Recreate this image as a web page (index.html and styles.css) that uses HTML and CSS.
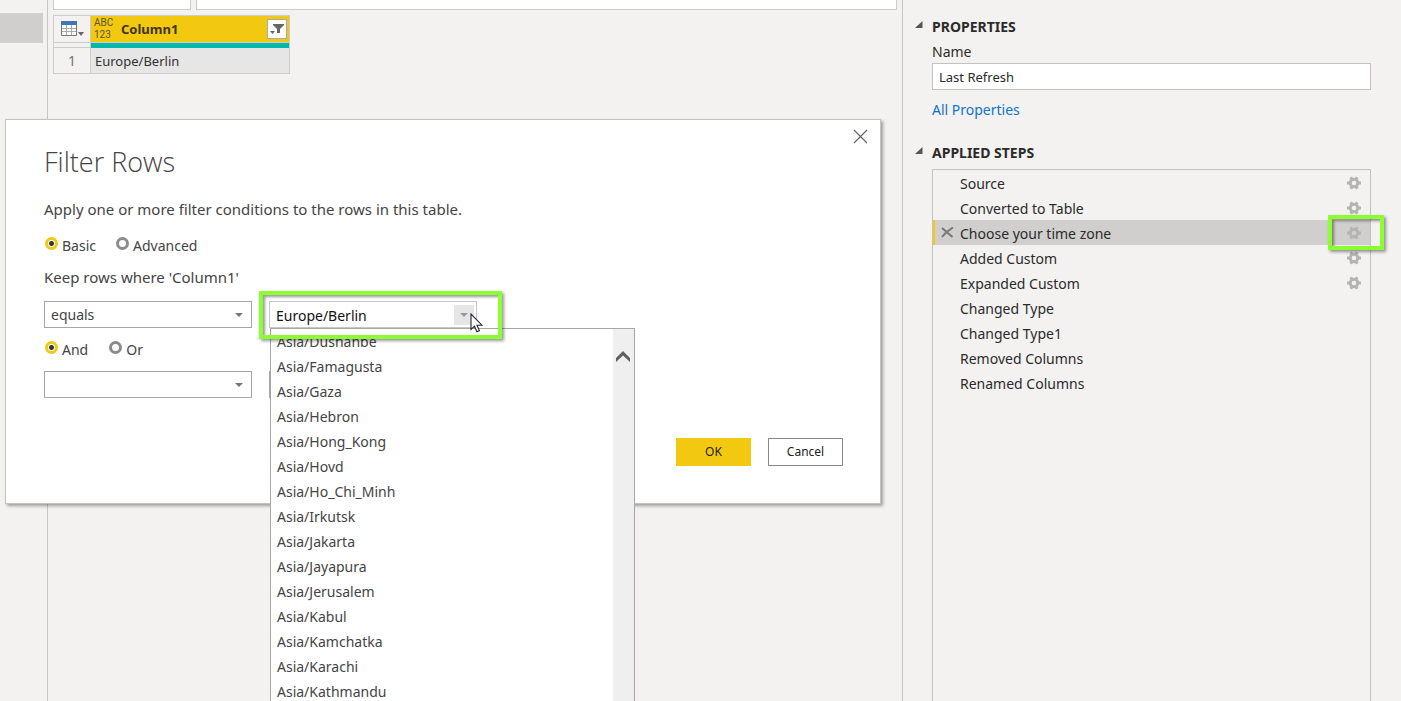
FILE: index.html
```html
<!DOCTYPE html>
<html lang="en">
<head>
<meta charset="utf-8">
<title>Power Query Editor</title>
<link rel="stylesheet" href="styles.css">
</head>
<body>
<svg class="defs" aria-hidden="true">
  <symbol id="gear" viewBox="0 0 14 14">
    <circle cx="7" cy="7" r="3.800" fill="none" stroke="currentColor" stroke-width="3"/>
    <path stroke="currentColor" stroke-width="3" d="M0 7h2.500M11.500 7H14M3.700 1.300L4.900 3.300M9.100 10.700l1.200 2M10.300 1.300L9.100 3.300M4.900 10.700L3.700 12.700"/>
  </symbol>
  <symbol id="caret" viewBox="0 0 8 4"><path fill="currentColor" d="M0 0h8L4 4z"/></symbol>
  <symbol id="collapse" viewBox="0 0 8 8"><path fill="currentColor" d="M7.500 0v7H0z"/></symbol>
</svg>
<div class="app">
  <div class="editor">
    <nav class="queries"><div class="query-selected"></div></nav>
    <main class="workspace">
      <div class="formula-row">
        <div class="formula-tools"></div>
        <div class="formula-bar"></div>
      </div>
      <table class="preview">
        <thead>
          <tr class="head">
            <th class="corner">
              <svg width="24" height="16" viewBox="0 0 24 16" aria-hidden="true">
                <path fill="#fff" stroke="#777" d="M.5.5h15v14H.5z"/>
                <path fill="none" stroke="#aaa" d="M5.500 3v11M10.500 3v11M1 7.500h14M1 10.500h14"/>
                <path fill="#3f76b5" d="M0 0h16v4H0z"/>
                <path fill="#666" d="M17 11h6l-3 4z"/>
              </svg>
            </th>
            <th class="column">
              <div class="column-head">
                <span class="type">ABC<br>123</span>
                <span class="column-name">Column1</span>
                <button class="filter" aria-label="Filter column">
                  <svg width="14" height="12" viewBox="0 0 14 12" aria-hidden="true"><path fill="#666" d="M3 1h11v1L10 6v4H7V6L3 2zM0 8h5L2.500 11z"/></svg>
                </button>
              </div>
            </th>
          </tr>
          <tr class="quality"><td class="corner"></td><td class="bar"></td></tr>
        </thead>
        <tbody>
          <tr class="data"><th class="corner">1</th><td class="value">Europe/Berlin</td></tr>
        </tbody>
      </table>
    </main>

    <section class="dialog" role="dialog" aria-labelledby="dialog-title">
      <button class="close" aria-label="Close">
        <svg width="15" height="15" viewBox="0 0 15 15" aria-hidden="true"><path fill="none" stroke="#666" stroke-width="1.200" d="M1 1l13 13M14 1L1 14"/></svg>
      </button>
      <h1 id="dialog-title">Filter Rows</h1>
      <p class="intro">Apply one or more filter conditions to the rows in this table.</p>
      <div class="choices mode">
        <label><input type="radio" name="mode" checked>Basic</label>
        <label><input type="radio" name="mode">Advanced</label>
      </div>
      <p class="keep">Keep rows where 'Column1'</p>
      <div class="condition">
        <div class="field">
          <select aria-label="Operator"><option>equals</option></select>
          <svg class="caret" aria-hidden="true"><use href="#caret"/></svg>
        </div>
        <div class="field combo">
          <input type="text" value="Europe/Berlin" aria-label="Value">
          <button class="open" aria-label="Show values"><svg class="caret-small" aria-hidden="true"><use href="#caret"/></svg></button>
          <div class="menu">
            <ul role="listbox" aria-label="Values">
              <li role="option">Asia/Dushanbe</li>
              <li role="option">Asia/Famagusta</li>
              <li role="option">Asia/Gaza</li>
              <li role="option">Asia/Hebron</li>
              <li role="option">Asia/Hong_Kong</li>
              <li role="option">Asia/Hovd</li>
              <li role="option">Asia/Ho_Chi_Minh</li>
              <li role="option">Asia/Irkutsk</li>
              <li role="option">Asia/Jakarta</li>
              <li role="option">Asia/Jayapura</li>
              <li role="option">Asia/Jerusalem</li>
              <li role="option">Asia/Kabul</li>
              <li role="option">Asia/Kamchatka</li>
              <li role="option">Asia/Karachi</li>
              <li role="option">Asia/Kathmandu</li>
            </ul>
            <div class="scroll">
              <svg width="14" height="12" viewBox="0 0 14 12" aria-hidden="true"><path fill="#606060" d="M7 0l7 7v4L7 4.500 0 11V7z"/></svg>
            </div>
          </div>
          <div class="highlight combo-highlight"></div>
          <svg class="pointer" width="13" height="20" viewBox="0 0 13 20" aria-hidden="true"><path fill="#fff" stroke="#223" stroke-width="1.100" d="M1 1v15.500l3.500-3.300 2.400 5.500 2.500-1.100L7 12.200h5z"/></svg>
        </div>
      </div>
      <div class="choices joiner">
        <label><input type="radio" name="joiner" checked>And</label>
        <label><input type="radio" name="joiner">Or</label>
      </div>
      <div class="condition">
        <div class="field">
          <select aria-label="Second operator"><option></option></select>
          <svg class="caret" aria-hidden="true"><use href="#caret"/></svg>
        </div>
        <div class="field"><input type="text" aria-label="Second value"></div>
      </div>
      <div class="actions">
        <button class="ok">OK</button>
        <button class="cancel">Cancel</button>
      </div>
    </section>
  </div>

  <aside class="settings">
    <h2><svg class="collapse" aria-hidden="true"><use href="#collapse"/></svg>PROPERTIES</h2>
    <label class="name-label" for="query-name">Name</label>
    <input class="query-name" id="query-name" type="text" value="Last Refresh">
    <a class="all" href="#">All Properties</a>
    <h2 class="steps-title"><svg class="collapse" aria-hidden="true"><use href="#collapse"/></svg>APPLIED STEPS</h2>
    <ul class="steps">
      <li><span>Source</span><button class="gear" aria-label="Edit Source"><svg><use href="#gear"/></svg></button></li>
      <li><span>Converted to Table</span><button class="gear" aria-label="Edit Converted to Table"><svg><use href="#gear"/></svg></button></li>
      <li class="selected">
        <button class="delete" aria-label="Delete step"><svg width="13" height="11" viewBox="0 0 13 11"><path fill="none" stroke="#777" stroke-width="2" d="M1 1l10.500 9M12 .5C8 3 4 6 1 10"/></svg></button>
        <span>Choose your time zone</span>
        <button class="gear" aria-label="Edit Choose your time zone"><svg><use href="#gear"/></svg></button>
        <div class="highlight step-highlight"></div>
      </li>
      <li><span>Added Custom</span><button class="gear" aria-label="Edit Added Custom"><svg><use href="#gear"/></svg></button></li>
      <li><span>Expanded Custom</span><button class="gear" aria-label="Edit Expanded Custom"><svg><use href="#gear"/></svg></button></li>
      <li><span>Changed Type</span></li>
      <li><span>Changed Type1</span></li>
      <li><span>Removed Columns</span></li>
      <li><span>Renamed Columns</span></li>
    </ul>
  </aside>
</div>
</body>
</html>
```
FILE: styles.css
```css
* { box-sizing: border-box; }
body {
  margin: 0;
  height: 100vh;
  overflow: hidden;
  background: #f3f2f0;
  color: #333;
  font-family: "Noto Sans", "Open Sans", sans-serif;
  font-size: 14px;
  line-height: 20px;
}
h1, h2, p, ul { margin: 0; padding: 0; }
ul { list-style: none; }
button { margin: 0; padding: 0; border: 0; background: none; font: inherit; color: inherit; }
input, select { margin: 0; font: inherit; color: inherit; }
svg { display: block; }
.defs { position: absolute; width: 0; height: 0; }

.app { display: flex; height: 100vh; }
.editor { position: relative; flex: 1; display: flex; min-width: 0; }
.queries { flex: 0 0 48px; padding-top: 13px; border-right: 1px solid #c8c6c4; }
.query-selected { width: 43px; height: 30px; background: #d0cfcd; }
.workspace { flex: 1; padding: 0 5px; }
.formula-row { display: flex; gap: 5px; height: 10px; }
.formula-tools, .formula-bar { background: #fff; border: 1px solid #ccc; border-top: 0; }
.formula-tools { flex: 0 0 138px; }
.formula-bar { flex: 1; }

.preview {
  width: 237px;
  margin-top: 5px;
  border-collapse: separate;
  border-spacing: 0;
  border: 1px solid #ccc;
  table-layout: fixed;
}
.preview th, .preview td { padding: 0; font-weight: 400; text-align: left; }
.preview .corner { width: 37px; border-right: 1px solid #ccc; color: #8a6f60; text-align: center; }
.head th { height: 27px; border-bottom: 1px solid #ccc; }
.head .corner svg { margin: 0 auto 0 7px; }
.column { background: #f2c811; }
.column-head { display: flex; align-items: center; padding: 0 2px 0 3px; }
.type { width: 27px; font-family: Roboto, sans-serif; font-size: 10px; line-height: 12px; color: #5c5430; }
.column-name { flex: 1; font-size: 13px; font-weight: 700; line-height: 20px; color: #3d3520; }
.filter { display: grid; place-items: center; width: 20px; height: 20px; background: #fff; border: 1px solid #aaa; }
.quality td { height: 5px; }
.quality .corner { border-bottom: 1px solid #ccc; }
.bar { background: #01b8aa; }
.data th, .data td { height: 25px; }
.preview .value { padding-left: 4px; background: #e6e6e6; font-size: 13px; }

.dialog {
  position: absolute;
  top: 119px;
  left: 5px;
  right: 21px;
  padding: 23px 37px 37px 38px;
  background: #fff;
  border: 1px solid #c3c3c3;
  box-shadow: 2px 2px 3px rgba(0, 0, 0, .35);
  color: #444;
}
.close { position: absolute; top: 9px; right: 12px; }
.dialog h1 {
  font-family: "Open Sans", "Noto Sans", sans-serif;
  font-size: 27px;
  font-weight: 300;
  line-height: 38px;
}
.intro, .keep { font-size: 15px; }
.intro { margin-top: 18px; }
.choices { display: flex; }
.mode { margin-top: 17px; gap: 19px; }
.joiner { margin-top: 12px; gap: 20px; }
.choices label { display: flex; align-items: flex-start; gap: 4px; padding-left: 1px; }
.choices input {
  appearance: none;
  width: 13px;
  height: 13px;
  margin-top: 1px;
  border: 3px solid #8b8b8b;
  border-radius: 50%;
  background: #fff;
}
.choices input:checked { border-color: #f2c811; background: radial-gradient(circle, #333 2px, #fff 3px); }
.keep { margin-top: 11px; }
.condition { display: flex; gap: 17px; margin-top: 11px; }
.keep + .condition { margin-top: 14px; }
.field { position: relative; width: 208px; height: 27px; }
.field select, .field input {
  appearance: none;
  display: block;
  width: 100%;
  height: 27px;
  padding: 1px 6px 0;
  border: 1px solid #a6a6a6;
  border-radius: 0;
  background: #fff;
}
.caret { position: absolute; top: 12px; right: 9px; width: 8px; height: 4px; color: #777; }
.combo input { color: #111; border-color: #c6c6c6; }
.open { position: absolute; top: 4px; right: 3px; display: grid; place-items: center; width: 20px; height: 20px; background: #e6e6e6; }
.caret-small { width: 8px; height: 4px; color: #999; }
.menu {
  position: absolute;
  z-index: 1;
  top: 27px;
  left: 1px;
  display: flex;
  width: 365px;
  border: 1px solid #a6a6a6;
  background: #fff;
}
.menu ul { flex: 1; }
.menu li { padding-left: 6px; line-height: 25px; }
.scroll { width: 21px; padding: 22px 3px 0; background: #efefef; }
.highlight { position: absolute; z-index: 2; border: 4px solid #8cff32; box-shadow: 2px 2px 3px rgba(0, 0, 0, .4), inset 2px 2px 3px rgba(0, 0, 0, .4); }
.combo-highlight { top: -10px; left: -10px; width: 243px; height: 48px; }
.pointer { position: absolute; z-index: 3; top: 12px; left: 201px; }
.actions { display: flex; justify-content: flex-end; gap: 17px; margin-top: 40px; }
.actions button { width: 75px; height: 28px; font-size: 12px; color: #222; }
.ok { background: #f2c811; }
.actions .cancel { border: 1px solid #888; background: #fff; }

.settings {
  flex: 0 0 499px;
  display: flex;
  flex-direction: column;
  padding: 17px 30px 0 29px;
  border-left: 1px solid #c8c6c4;
  color: #2b2b2b;
}
.settings h2 { position: relative; font-size: 14px; font-weight: 700; line-height: 20px; }
.collapse { position: absolute; top: 4px; left: -17px; width: 8px; height: 8px; color: #555; }
.name-label { margin-top: 5px; }
.query-name { width: 100%; height: 27px; margin-top: 1px; padding: 1px 6px 0; border: 1px solid #c2c2c2; border-radius: 0; background: #fff; font-size: 13px; }
.all { align-self: flex-start; margin-top: 10px; color: #0f74cc; text-decoration: none; }
.steps-title { margin-top: 23px; }
.steps { flex: 1; margin-top: 6px; border: 1px solid #c2c2c2; border-bottom: 0; }
.steps li { position: relative; display: flex; align-items: center; height: 25px; padding: 0 9px 0 27px; }
.steps span { flex: 1; padding-top: 2px; line-height: 23px; }
.steps .selected { background: #d0cfcd; box-shadow: inset 2px 0 #f2c811; }
.gear, .gear svg { width: 14px; height: 14px; color: #b4b4b4; }
.delete { position: absolute; top: 7px; left: 8px; }
.step-highlight { top: -5px; right: -14px; width: 56px; height: 35px; }
```
